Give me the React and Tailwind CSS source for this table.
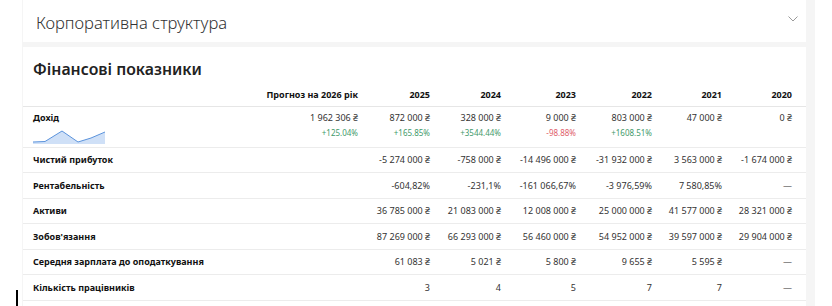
import React from 'react';

const years = ['2025', '2024', '2023', '2022', '2021', '2020'];

const rows = [
    { label: 'Чистий прибуток', forecast: '', values: ['-5 274 000 ₴', '-758 000 ₴', '-14 496 000 ₴', '-31 932 000 ₴', '3 563 000 ₴', '-1 674 000 ₴'] },
    { label: 'Рентабельність', forecast: '', values: ['-604,82%', '-231,1%', '-161 066,67%', '-3 976,59%', '7 580,85%', '—'] },
    { label: 'Активи', forecast: '', values: ['36 785 000 ₴', '21 083 000 ₴', '12 008 000 ₴', '25 000 000 ₴', '41 577 000 ₴', '28 321 000 ₴'] },
    { label: 'Зобов\'язання', forecast: '', values: ['87 269 000 ₴', '66 293 000 ₴', '56 460 000 ₴', '54 952 000 ₴', '39 597 000 ₴', '29 904 000 ₴'] },
    { label: 'Середня зарплата до оподаткування', forecast: '', values: ['61 083 ₴', '5 021 ₴', '5 800 ₴', '9 655 ₴', '5 595 ₴', '—'] },
    { label: 'Кількість працівників', forecast: '', values: ['3', '4', '5', '7', '7', '—'] },
];

const income = [
    { v: '872 000 ₴', p: '+165.85%', up: true },
    { v: '328 000 ₴', p: '+3544.44%', up: true },
    { v: '9 000 ₴', p: '-98.88%', up: false },
    { v: '803 000 ₴', p: '+1608.51%', up: true },
    { v: '47 000 ₴', p: '' },
    { v: '0 ₴', p: '' },
];

function Sparkline() {
    return (
        <svg width="73" height="17" viewBox="0 0 73 17" className="block">
            <path d="M0 15 L12 14.5 L29 4 L45 15 L58 11 L72 5 L72 17 L0 17 Z" fill="#cfe0f7" />
            <path d="M0 15 L12 14.5 L29 4 L45 15 L58 11 L72 5" fill="none" stroke="#5b93dc" strokeWidth="1" />
        </svg>
    );
}

export default function App() {
    return (
        <div className="relative w-[832px] h-[306px] overflow-hidden bg-white" style={{ fontFamily: '"Noto Sans", "Open Sans", sans-serif' }}>
            <div className="ml-[22px] w-[793px] min-h-full bg-[#f5f5f5] pl-[1px] pr-[9px] flex flex-col gap-[5px]">
                <div className="bg-white h-[42px] flex items-center justify-between pl-[13px] pr-[8px]">
                    <span className="text-[16.6px] font-light text-[#333] pt-[4px]">Корпоративна структура</span>
                    <svg width="10" height="6" viewBox="0 0 10 6" className="mb-[4px]">
                        <path d="M0.5 0.5 L5 5 L9.5 0.5" fill="none" stroke="#9a9a9a" strokeWidth="1" />
                    </svg>
                </div>

                <div className="bg-white pt-[10px]">
                    <h2 className="pl-[10px] text-[15.8px] font-semibold text-[#222] leading-[24px]">Фінансові показники</h2>
                    <table className="w-full table-fixed border-collapse mt-[2px] text-[#333]">
                        <colgroup>
                            <col className="w-[235px]" />
                            <col className="w-[100px]" />
                            <col className="w-[72px]" />
                            <col className="w-[71px]" />
                            <col className="w-[75px]" />
                            <col className="w-[76px]" />
                            <col className="w-[70px]" />
                            <col className="w-[84px]" />
                        </colgroup>
                        <thead>
                            <tr className="h-[23px] border-b border-[#e6e6e6] text-[9px] font-bold text-[#111]">
                                <th className="pl-[10px]"></th>
                                <th className="text-right whitespace-nowrap">Прогноз на 2026 рік</th>
                                {years.map((y, i) => (
                                    <th key={y} className={`text-right ${i === years.length - 1 ? 'pr-[14px]' : ''}`}>{y}</th>
                                ))}
                            </tr>
                        </thead>
                        <tbody>
                            <tr className="h-[41px] border-b border-[#ececec] align-top">
                                <td className="pl-[10px] pt-[5px]">
                                    <div className="text-[9px] font-bold text-[#111] leading-[12px]">Дохід</div>
                                    <div className="mt-[3px]"><Sparkline /></div>
                                </td>
                                <td className="text-right pt-[5px] whitespace-nowrap">
                                    <div className="text-[9px] leading-[12px]">1 962 306 ₴</div>
                                    <div className="text-[8px] leading-[12px] mt-[3px] text-[#3f9a6b]">+125.04%</div>
                                </td>
                                {income.map((c, i) => (
                                    <td key={i} className={`text-right pt-[5px] whitespace-nowrap ${i === income.length - 1 ? 'pr-[14px]' : ''}`}>
                                        <div className="text-[9px] leading-[12px]">{c.v}</div>
                                        {c.p && (
                                            <div className={`text-[8px] leading-[12px] mt-[3px] ${c.up ? 'text-[#3f9a6b]' : 'text-[#e0606a]'}`}>{c.p}</div>
                                        )}
                                    </td>
                                ))}
                            </tr>
                            {rows.map((r) => (
                                <tr key={r.label} className="h-[25.6px] border-b border-[#ececec] text-[9px]">
                                    <td className="pl-[10px] font-bold text-[#111] whitespace-nowrap">{r.label}</td>
                                    <td className="text-right">{r.forecast}</td>
                                    {r.values.map((v, i) => (
                                        <td key={i} className={`text-right whitespace-nowrap ${i === r.values.length - 1 ? 'pr-[14px]' : ''}`}>{v}</td>
                                    ))}
                                </tr>
                            ))}
                        </tbody>
                    </table>
                    <div className="h-[20px]"></div>
                </div>
            </div>
            <div className="absolute left-[16px] top-[290px] w-[2px] h-[16px] bg-black"></div>
        </div>
    );
}
